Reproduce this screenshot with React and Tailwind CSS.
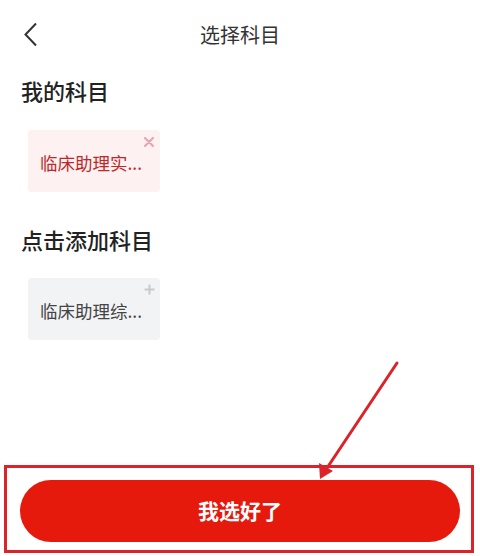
import React from "react";

const font = { fontFamily: '"Noto Sans CJK SC", "Noto Sans", sans-serif' };

function SubjectChip({ label, selected }) {
  return (
    <div
      className={
        "relative ml-[7px] flex h-[62px] w-[132px] items-center rounded-[4px] pl-[12px] pt-[3px] text-[17.5px] " +
        (selected ? "bg-[#fdf1f1] text-[#bd282b]" : "bg-[#f2f3f5] text-[#444444]")
      }
    >
      <span className="leading-none">{label}</span>
      {selected ? (
        <svg className="absolute right-[6px] top-[7px]" width="10" height="10" viewBox="0 0 10 10">
          <path d="M1 1L9 9M9 1L1 9" stroke="#e9a3ab" strokeWidth="2" strokeLinecap="round" />
        </svg>
      ) : (
        <svg className="absolute right-[5px] top-[6px]" width="11" height="11" viewBox="0 0 11 11">
          <path d="M5.5 0.5V10.5M0.5 5.5H10.5" stroke="#c9c9c9" strokeWidth="2" />
        </svg>
      )}
    </div>
  );
}

export default function App() {
  return (
    <div className="relative flex h-[556px] w-[480px] flex-col bg-white" style={font}>
      {/* top bar */}
      <div className="grid h-[70px] grid-cols-[1fr_auto_1fr] items-center">
        <div className="pl-[24px]">
          <svg width="14" height="26" viewBox="0 0 14 26">
            <path d="M12 1.5L1.5 12.5L12 23.5" fill="none" stroke="#333333" strokeWidth="2" />
          </svg>
        </div>
        <div className="text-[20px] leading-none text-[#333333]">选择科目</div>
        <div />
      </div>

      <div className="px-[21px]">
        <h2 className="mt-[5px] text-[22px] font-medium leading-[30px] text-[#222222]">我的科目</h2>
        <div className="mt-[25px]">
          <SubjectChip label="临床助理实..." selected />
        </div>

        <h2 className="mt-[32px] text-[22px] font-medium leading-[30px] text-[#222222]">点击添加科目</h2>
        <div className="mt-[24px]">
          <SubjectChip label="临床助理综..." />
        </div>
      </div>

      {/* confirm button, boxed */}
      <div className="mb-[3px] ml-[4px] mt-auto w-[470px] border-[3px] border-[#dc2329] pb-[8px] pl-[13px] pr-[11px] pt-[12px]">
        <button className="flex h-[62px] w-full items-center justify-center rounded-full bg-[#e6190d] text-[21px] font-bold text-white">
          我选好了
        </button>
      </div>

      {/* pointer arrow */}
      <svg className="pointer-events-none absolute inset-0" width="480" height="556" viewBox="0 0 480 556">
        <line x1="397" y1="363" x2="327" y2="468" stroke="#dc2329" strokeWidth="3" strokeLinecap="round" />
        <path d="M320 479L319 463L333 471Z" fill="#dc2329" />
      </svg>
    </div>
  );
}
